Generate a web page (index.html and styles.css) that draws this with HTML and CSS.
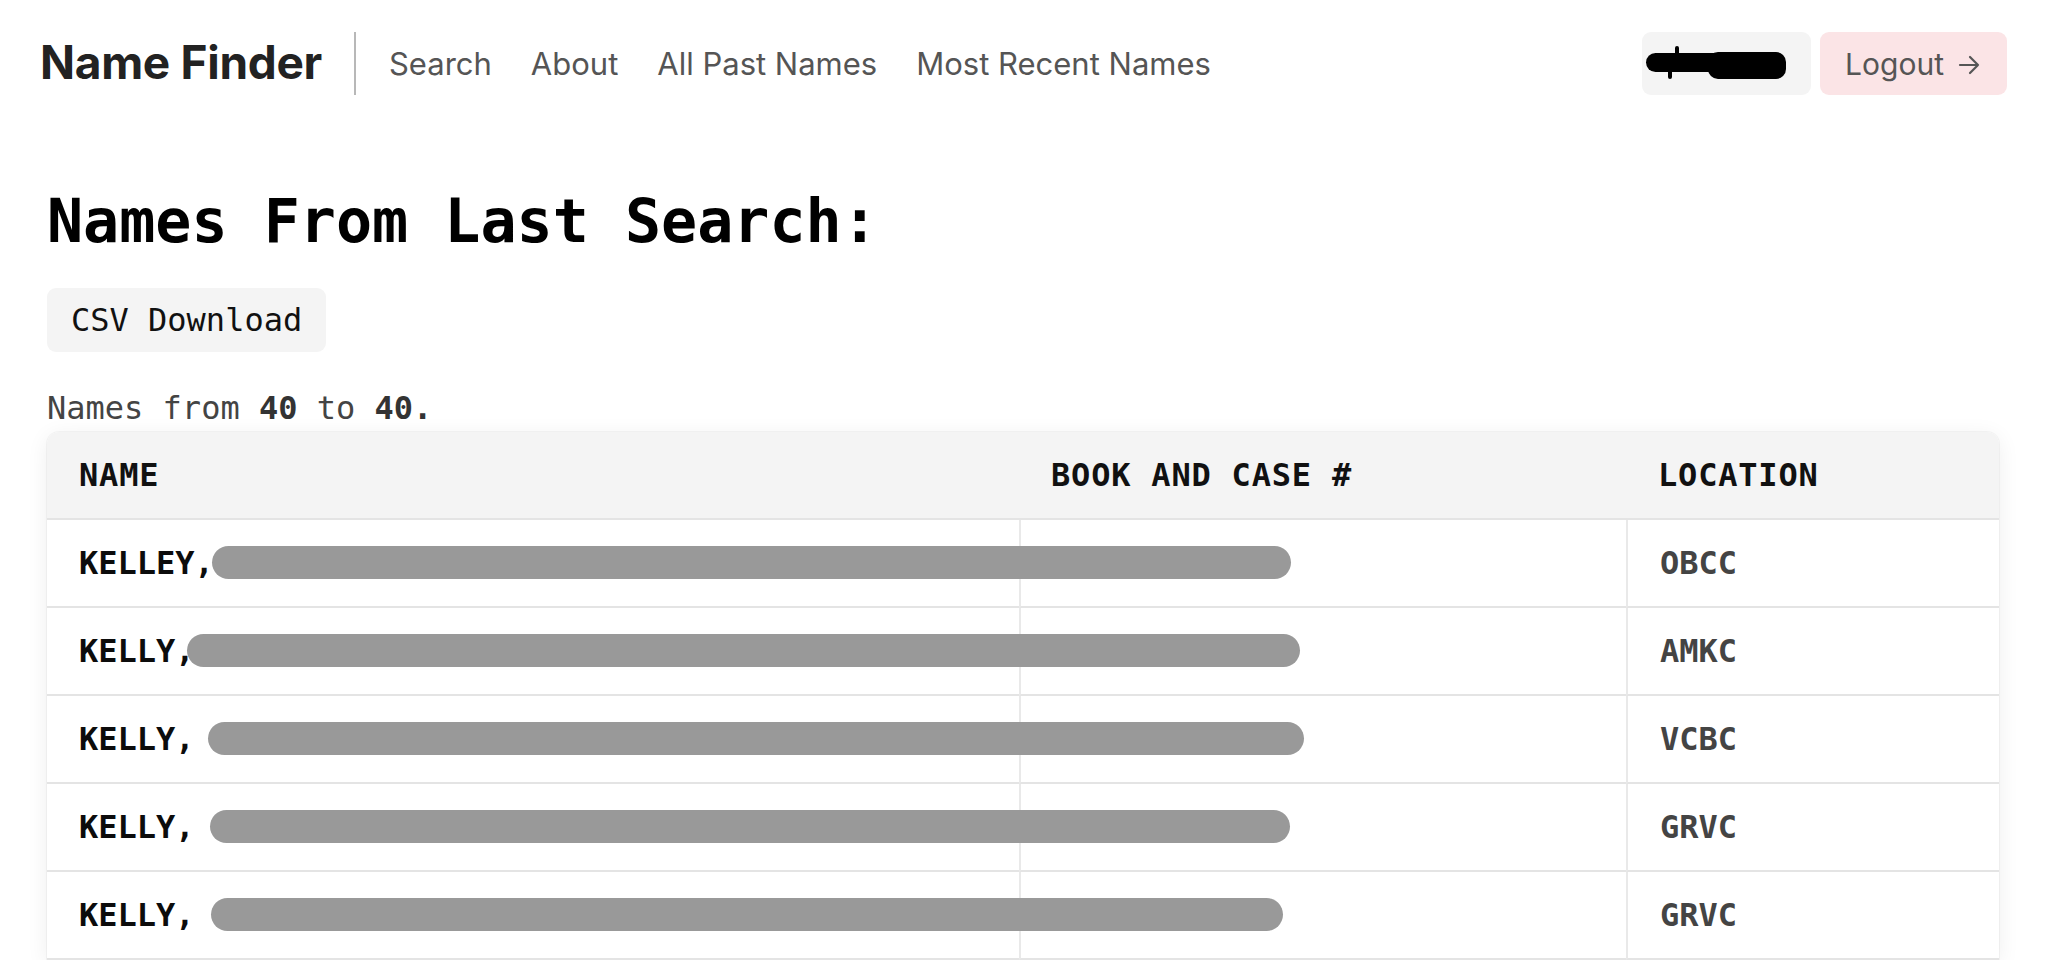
FILE: index.html
```html
<!DOCTYPE html>
<html lang="en">
<head>
<meta charset="utf-8">
<title>Name Finder</title>
<link rel="stylesheet" href="styles.css">
</head>
<body>
<header class="topbar">
  <div class="brand-group">
    <a class="brand" href="#">Name Finder</a>
    <span class="divider"></span>
    <nav class="nav-links">
      <a href="#">Search</a>
      <a href="#">About</a>
      <a href="#">All Past Names</a>
      <a href="#">Most Recent Names</a>
    </nav>
  </div>
  <div class="actions">
    <span class="user-chip">
      <svg class="redact-mark" width="145" height="63" viewBox="0 0 145 63" aria-hidden="true">
        <rect x="4" y="21" width="110" height="19" rx="9.5" fill="#000"/>
        <rect x="66" y="20" width="78" height="27" rx="10" fill="#000"/>
        <rect x="33" y="14" width="4" height="12" rx="2" fill="#000"/>
        <rect x="26" y="34" width="4" height="13" rx="2" fill="#000"/>
      </svg>
    </span>
    <a class="logout" href="#">Logout
      <svg class="arrow" width="22" height="20" viewBox="0 0 22 20" aria-hidden="true">
        <path d="M2 10 H20 M12 2 L20 10 L12 18" fill="none" stroke="currentColor" stroke-width="2.2" stroke-linecap="round" stroke-linejoin="round"/>
      </svg>
    </a>
  </div>
</header>

<main class="content">
  <h1 class="page-title">Names From Last Search:</h1>
  <button class="csv-btn" type="button">CSV Download</button>
  <p class="range">Names from <b>40</b> to <b>40.</b></p>

  <div class="table-card">
    <table class="names-table">
      <colgroup>
        <col class="col-name">
        <col class="col-book">
        <col class="col-loc">
      </colgroup>
      <thead>
        <tr><th>NAME</th><th>BOOK AND CASE #</th><th>LOCATION</th></tr>
      </thead>
      <tbody>
        <tr>
          <td class="name-cell">KELLEY,<span class="redact" style="margin-left:-2px;width:1079px"></span></td>
          <td></td>
          <td class="loc-cell">OBCC</td>
        </tr>
        <tr>
          <td class="name-cell">KELLY,<span class="redact" style="margin-left:-8px;width:1113px"></span></td>
          <td></td>
          <td class="loc-cell">AMKC</td>
        </tr>
        <tr>
          <td class="name-cell">KELLY, <span class="redact" style="margin-left:-6px;width:1096px"></span></td>
          <td></td>
          <td class="loc-cell">VCBC</td>
        </tr>
        <tr>
          <td class="name-cell">KELLY, <span class="redact" style="margin-left:-4px;width:1080px"></span></td>
          <td></td>
          <td class="loc-cell">GRVC</td>
        </tr>
        <tr>
          <td class="name-cell">KELLY, <span class="redact" style="margin-left:-3px;width:1072px"></span></td>
          <td></td>
          <td class="loc-cell">GRVC</td>
        </tr>
      </tbody>
    </table>
  </div>
</main>
</body>
</html>
```

FILE: styles.css
```css
* { box-sizing: border-box; }

html, body {
  margin: 0;
  background: #ffffff;
}

body {
  font-family: Inter, "Noto Sans", "Liberation Sans", sans-serif;
  color: #222;
}

a { text-decoration: none; color: inherit; }

/* ---------- top bar ---------- */
.topbar {
  display: flex;
  align-items: center;
  justify-content: space-between;
  padding: 32px 40px;
}

.brand-group {
  display: flex;
  align-items: center;
  height: 63px;
}

.brand {
  font-size: 46px;
  font-weight: 700;
  letter-spacing: -0.3px;
  color: #222;
  line-height: 63px;
  margin-bottom: 2px;
}

.divider {
  width: 2px;
  height: 63px;
  background: #b8b8b8;
  margin: 0 33px 0 32px;
}

.nav-links {
  display: flex;
  gap: 39px;
  font-size: 31px;
  line-height: 40px;
  color: #555;
}

.actions {
  display: flex;
  align-items: center;
  gap: 9px;
}

.user-chip {
  display: flex;
  align-items: center;
  height: 63px;
  padding-right: 24px;
  background: #f4f4f4;
  border-radius: 9px;
}

.redact-mark { display: block; }

.logout {
  display: flex;
  align-items: center;
  gap: 14px;
  height: 63px;
  padding: 0 27px 0 25px;
  background: #fbe4e6;
  border-radius: 9px;
  font-size: 30px;
  color: #555;
}

.arrow { display: block; margin-top: 2px; }

/* ---------- content ---------- */
.content {
  padding: 0 48px 0 47px;
  font-family: "DejaVu Sans Mono", "Liberation Mono", monospace;
}

.page-title {
  margin: 58px 0 0;
  font-size: 60px;
  line-height: 72px;
  font-weight: 700;
  color: #000;
}

.csv-btn {
  display: block;
  margin-top: 31px;
  padding: 16px 24px;
  border: none;
  border-radius: 9px;
  background: #f4f4f4;
  font-family: inherit;
  font-size: 32px;
  line-height: 32px;
  color: #111;
}

.range {
  margin: 32px 0 0;
  font-size: 32px;
  line-height: 48px;
  color: #444;
}

.range b { color: #333; }

/* ---------- table ---------- */
.table-card {
  background: #fff;
  border-radius: 12px 12px 0 0;
  box-shadow: 0 0 0 1px rgba(0,0,0,0.035), 0 4px 22px rgba(0,0,0,0.07);
}

.names-table {
  width: 100%;
  table-layout: fixed;
  border-collapse: separate;
  border-spacing: 0;
  font-size: 32px;
  line-height: 48px;
}

.col-name { width: 972px; }
.col-book { width: 607px; }

.names-table th {
  text-align: left;
  font-weight: 700;
  letter-spacing: 0.8px;
  color: #111;
  background: #f4f4f4;
  padding: 19px 32px;
  border-bottom: 2px solid #e4e4e4;
}

.names-table th:first-child { border-top-left-radius: 12px; }
.names-table th:last-child { border-top-right-radius: 12px; }

.names-table td {
  padding: 19px 32px;
  border-bottom: 2px solid #e4e4e4;
  font-weight: 700;
  white-space: nowrap;
}

.names-table td + td { border-left: 2px solid #e9e9e9; }

.name-cell { color: #0c0c0c; }
.loc-cell { color: #444; }

.redact {
  position: relative;
  z-index: 1;
  display: inline-block;
  height: 33px;
  vertical-align: -5px;
  background: #999;
  border-radius: 17px;
}
```
